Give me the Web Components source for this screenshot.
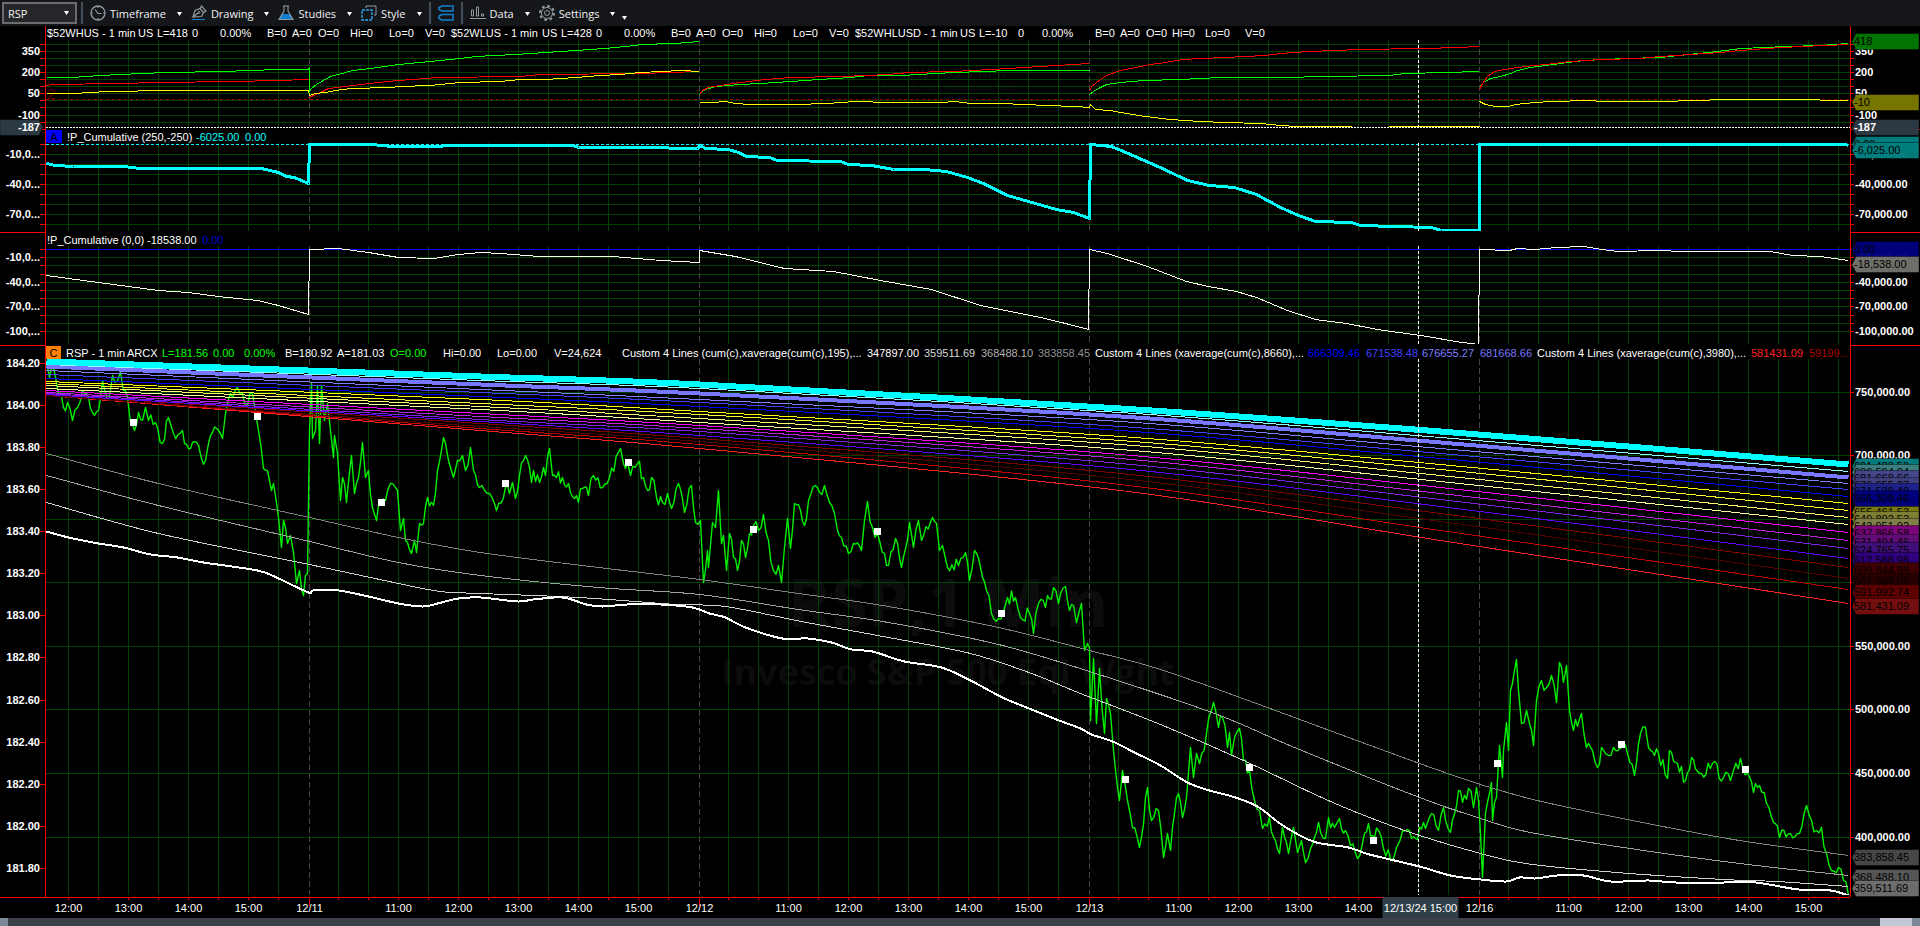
<!DOCTYPE html>
<html lang="en">
<head>
<meta charset="utf-8">
<title>RSP - 1 min</title>
<style>
html, body {
    margin: 0;
    height: 100%;
    background: #000;
    overflow: hidden;
}
</style>
</head>
<body>
<chart-window></chart-window>

<script>
const LEFT = 46
const WIDTH = 1804
const SESSIONS = [309, 699, 1089, 1479]
const CURSOR = 1418

// half-hour lines; the one next to a session start is replaced by the session line
const GRID_X = []
for (let x = 68; x < 1850; x += 30) {
    if (!SESSIONS.includes(x + 1)) GRID_X.push(x)
}

const pct = (value, start, size) => `${(value - start) / size * 100}%`
const line = (x1, y1, x2, y2, stroke, extra = '') =>
    `<line x1="${x1}" y1="${y1}" x2="${x2}" y2="${y2}" stroke="${stroke}" ${extra}/>`

function parse(points) {
    return points.trim().split(/\s+/).map(p => p.split(',').map(Number))
}

// Catmull-Rom through the points
function smooth(points) {
    const p = parse(points)
    let d = `M${p[0]}`
    for (let i = 0; i < p.length - 1; i++) {
        const a = p[i - 1] || p[i], b = p[i], c = p[i + 1], e = p[i + 2] || c
        d += `C${b[0] + (c[0] - a[0]) / 6},${b[1] + (c[1] - a[1]) / 6} ${c[0] - (e[0] - b[0]) / 6},${c[1] - (e[1] - b[1]) / 6} ${c}`
    }
    return d
}

// fills in the small ticks between two price turns
function ticks(points) {
    const p = parse(points)
    let seed = 7
    let d = `M${p[0]}`
    for (let i = 1; i < p.length; i++) {
        const [x0, y0] = p[i - 1], [x1, y1] = p[i]
        const n = Math.floor((x1 - x0) / 2)
        for (let k = 1; k < n; k++) {
            seed = (seed * 16807) % 2147483647
            const noise = (seed / 2147483647 - .5) * 14
            d += `L${x0 + (x1 - x0) * k / n},${y0 + (y1 - y0) * k / n + noise}`
        }
        d += `L${x1},${y1}`
    }
    return d
}

const quote = (name, widths, last) => {
    const texts = [name, 'US', last, '0', '0.00%', 'B=0', 'A=0', 'O=0', 'Hi=0', 'Lo=0', 'V=0']
    return texts.map((t, i) => [t, widths[i]])
}

const band = (color, ys, width = 1) => {
    const xs = [46, 480, 699, 1120, 1440, 1848]
    return {color, width, d: smooth(xs.map((x, i) => `${x},${ys[i]}`).join(' '))}
}
const poly = (color, points, width = 1) => ({color, width, d: 'M' + points.trim().replace(/\s+/g, 'L').replaceAll('LM', 'M')})

const PANES = [
    {
        top: 26, height: 104, head: 14, plot: 88,
        header: [
            ...quote('$52WHUS - 1 min', [92, 19, 35, 28, 47, 25, 26, 32, 39, 36, 26], 'L=418'),
            ...quote('$52WLUS - 1 min', [91, 19, 35, 28, 47, 25, 26, 32, 39, 36, 26], 'L=428'),
            ...quote('$52WHLUSD - 1 min', [105, 19, 39, 24, 53, 25, 26, 26, 33, 40, 26], 'L=-10')
        ],
        grid: [44, 51, 58, 65, 72, 79, 86, 93, 100, 107, 115, 122],
        levels: [{y: 99, color: '#a00000', dash: '3 3'}],
        cursorY: 127,
        labels: [[51, '350'], [72, '200'], [93, '50'], [115, '-100']],
        leftTags: [[127, '-187', '#2e3b45', '#fff']],
        rightTags: [[41, '418', '#007800'], [102, '-10', '#7a7a00'], [127, '-187', '#2e3b45', '#fff']],
        watermark: [['$52WHUS,1 Min', 77, 15], ['$52WLUS,1Min,  $52WHLUSD,1Min', 89, 8]],
        note: '2',
        series: [
            poly('#00ff00', `46,77 72,77 99,75 141,73 167,72 223,71 249,70 279,69 308,69 309,67 309,91 311,88 316,84 323,80 330,76 345,72 352,70
                370,68 398,64 430,61 460,58 475,56 515,54 545,52 575,50 604,48 635,45 640,44 674,43 699,41 M699,95 700,92 705,89 715,86 740,84
                760,83 790,81 819,79 850,77 868,75 901,75 935,73 954,72 983,71 1008,70 1089,70 M1089,94 1093,91 1100,87 1106,84 1120,82 1144,80
                1180,79 1220,77 1280,77 1327,76 1388,75 1405,73 1446,72 1478,71 M1479,86 1483,82 1490,78 1500,76 1510,73 1517,70 1530,67 1545,65
                1560,63 1584,60 1625,58 1660,57 1688,54 1717,51 1741,48 1786,46 1819,45 1848,43`),
            poly('#ff0000', `46,85 52,84 118,83 158,82 233,81 276,80 309,79 M309,97 313,95 320,92 328,88 345,86 360,84 378,82 398,80 425,78 437,77
                520,76 540,74 640,73 699,71 M699,94 702,90 708,87 720,85 740,82 765,79 790,77 840,76 868,75 901,73 905,72 952,71 991,69 1024,67
                1056,65 1089,63 M1089,91 1091,86 1100,79 1106,75 1120,70 1135,67 1150,64 1165,62 1182,59 1200,58 1225,57 1265,55 1280,53 1307,51
                1337,50 1357,49 1425,48 1456,47 1479,46 M1479,89 1482,83 1487,76 1494,71 1510,68 1525,66 1545,64 1570,61 1600,59 1640,58 1660,56
                1690,54 1720,52 1740,50 1765,48 1800,46 1825,45 1848,44`),
            poly('#ffff00', `46,93 74,93 90,92 108,91 130,91 145,90 308,90 309,95 315,93 325,92 335,90 350,88 390,87 400,86 430,85 440,84 460,82
                500,81 519,79 545,79 575,77 600,75 620,74 640,72 681,70 699,71 M699,102 712,102 725,101 735,103 750,104 795,104 827,103 855,101
                889,102 940,102 955,101 970,103 1000,103 1025,104 1045,105 1075,106 1089,107 1090,104 1095,109 1110,110 1120,112 1145,116 1170,119
                1200,121 1225,122 1260,123 1280,125 1296,126 1351,126 M1388,126 1479,126 M1479,101 1485,104 1495,106 1508,106 1515,104 1535,102
                1550,101 1590,100 1600,101 1665,101 1690,100 1730,99 1790,99 1848,100`)
        ]
    },
    {
        top: 130, height: 103, head: 13, plot: 88,
        badge: ['A', '#0000ff', 16],
        header: [['!P_Cumulative (250,-250)', 129], ['-6025.00', 49, '#00ffff'], ['0.00', 30, '#00ffff']],
        grid: [154, 164, 174, 184, 194, 204, 214, 224],
        levels: [{y: 144, color: '#00ffff', dash: '3 2'}],
        labels: [[154, '-10,000.00', '-10,0...'], [184, '-40,000.00', '-40,0...'], [214, '-70,000.00', '-70,0...']],
        rightTags: [[144, '0.00', '#007f7f'], [150, '-6,025.00', '#007f7f']],
        series: [
            poly('#00ffff', `46,163 55,165 73,166 124,166 139,168 261,168 278,172 286,176 294,177 308,183 309,144 371,144 392,146 440,146 445,145
                573,145 578,147 640,147 697,148 700,145 705,148 728,149 738,152 746,156 769,157 777,160 840,161 848,164 871,165 877,166 893,169
                924,169 946,171 967,177 983,183 995,189 1007,195 1028,201 1056,209 1073,212 1089,218 1090,144 1111,146 1130,154 1146,161 1162,168
                1187,180 1209,185 1234,187 1256,194 1280,207 1298,215 1315,221 1351,222 1360,225 1394,226 1431,227 1441,230 1479,230 1479,144
                1845,144 1848,145`, 3)
        ]
    },
    {
        top: 233, height: 113, head: 13, plot: 98,
        header: [['!P_Cumulative (0,0)', 101], ['-18538.00', 55], ['0.00', 30, '#0000d0']],
        grid: [257, 265, 274, 282, 290, 298, 306, 315, 323, 331],
        levels: [{y: 249, color: '#0000ff'}],
        labels: [[257, '-10,000.00', '-10,0...'], [282, '-40,000.00', '-40,0...'], [306, '-70,000.00', '-70,0...'], [331, '-100,000.00', '-100,...']],
        rightTags: [[249, '0.00', '#00007f'], [264, '-18,538.00', '#74746e']],
        series: [
            poly('#fffff0', `46,275 68,278 98,282 128,286 158,290 188,292 218,296 257,300 278,305 308,314 309,249 338,248 368,252 398,257 433,258
                458,254 480,252 500,253 539,256 612,256 661,260 699,262 699,250 735,256 784,268 833,271 880,280 931,289 980,305 1040,317 1065,323
                1088,329 1089,249 1107,253 1147,266 1186,281 1208,286 1236,291 1256,297 1287,310 1315,319 1346,323 1377,329 1427,336 1455,341
                1478,344 1479,249 1509,250 1517,248 1534,249 1556,247 1584,246 1601,249 1618,251 1657,250 1683,251 1770,251 1792,255 1820,256
                1848,260`)
        ]
    },
    {
        top: 346, height: 551, head: 13, plot: 536,
        badge: ['C', '#ff7f00', 15],
        header: [
            ['RSP - 1 min', 61], ['ARCX', 35], ['L=181.56', 51, '#00ff00'], ['0.00', 31, '#00ff00'], ['0.00%', 41, '#00ff00'],
            ['B=180.92', 52], ['A=181.03', 53], ['O=0.00', 53, '#00ff00'], ['Hi=0.00', 54], ['Lo=0.00', 57], ['V=24,624', 68],
            ['Custom 4 Lines (cum(c),xaverage(cum(c),195),...', 245], ['347897.00', 57], ['359511.69', 57, '#d8d8d8'],
            ['368488.10', 57, '#b0b0b0'], ['383858.45', 57, '#909090'],
            ['Custom 4 Lines (xaverage(cum(c),8660),...', 213], ['666309.46', 58, '#0000ff'], ['671538.48', 56, '#4040ff'],
            ['676655.27', 58, '#7f7fff'], ['681668.66', 57, '#7777ff'],
            ['Custom 4 Lines (xaverage(cum(c),3980),...', 214], ['581431.09', 58, '#ff2020'], ['59199...', 40, '#b00000']
        ],
        grid: [392, 455, 519, 582, 646, 709, 773, 837],
        levels: [],
        labels: [[392, '750,000.00'], [455, '700,000.00'], [646, '550,000.00'], [709, '500,000.00'], [773, '450,000.00'], [837, '400,000.00']],
        leftLabels: [[363, '184.20'], [405, '184.00'], [447, '183.80'], [489, '183.60'], [531, '183.40'], [573, '183.20'], [615, '183.00'],
            [657, '182.80'], [700, '182.60'], [742, '182.40'], [784, '182.20'], [826, '182.00'], [868, '181.80']],
        rightTags: [
            [466, '691,488.59', '#007f7f'], [472, '686,594.04', '#3f8080'], [478, '681,668.66', '#45458a'], [485, '676,655.27', '#404080'],
            [491, '671,538.48', '#20208c'], [512, '655,461.53', '#7f7f10'], [519, '649,802.53', '#808035'], [526, '643,951.92', '#80804a'],
            [498, '666,309.46', '#00007f'], [533, '637,866.58', '#7f007f'], [542, '631,494.46', '#600f78'], [550, '624,765.75', '#40107a'],
            [560, '617,588.98', '#300080'], [570, '609,844.99', '#400000'], [581, '601,309.00', '#280000'], [592, '591,992.74', '#600000'],
            [606, '581,431.09', '#7a1010'], [857, '383,858.45', '#4a4a4a'], [877, '368,488.10', '#5a5a5a'], [888, '359,511.69', '#707070']
        ],
        watermark: [['RSP,1 Min', 626, 66], ['Invesco S&amp;P 500 Eql Wght', 684, 36]],
        marks: [[133, 422], [257, 416], [381, 502], [505, 483], [629, 462], [753, 529], [877, 531], [1001, 613], [1125, 779], [1249, 767],
            [1373, 840], [1497, 763], [1621, 744], [1745, 769]],
        series: [
            {color: '#00f000', width: 1.4, soft: true, d: ticks(`46,362 49,377 52,362 55,377 58,393 63,407 67,402 72,420 77,407 82,390 88,397 92,412 98,410
                102,380 105,393 108,400 112,375 117,380 120,372 123,390 127,397 130,422 134,430 138,412 142,420 145,407 148,420 155,422 162,443
                168,417 173,433 182,430 184,443 192,442 198,445 201,458 205,460 208,443 212,432 218,430 222,438 225,413 230,393 237,387 242,393
                247,405 252,393 255,412 258,430 263,468 267,470 271,490 273,483 278,517 281,547 283,520 287,543 290,535 293,552 296,583 299,570
                303,595 305,575 307,573 309,430 311,382 312,438 315,430 317,385 319,443 321,385 324,420 327,403 330,430 333,457 334,435 337,453
                340,500 342,477 346,502 351,455 354,493 358,477 362,442 365,477 368,470 372,507 376,520 380,500 385,500 390,483 397,490 400,530
                403,518 405,540 411,553 414,540 416,552 419,523 423,523 427,497 433,505 437,470 443,437 445,443 448,460 453,477 457,460 462,455
                465,470 470,447 473,470 479,487 484,490 489,493 496,510 505,487 509,493 512,482 515,498 519,475 525,455 531,482 533,470 539,482
                543,467 545,475 549,448 552,475 562,477 568,483 578,502 582,488 588,495 593,475 602,487 609,477 620,448 623,463 627,462 630,475
                637,463 643,477 647,490 651,477 656,497 662,502 667,493 671,508 678,483 684,512 691,485 695,522 700,520 703,582 707,550 708,567
                712,522 715,527 718,490 721,543 723,535 726,570 729,533 733,557 737,570 741,540 745,557 749,533 753,525 758,530 763,514 768,540
                773,570 778,565 781,582 784,547 787,518 790,548 794,503 800,510 804,525 808,500 815,485 819,492 824,485 829,502 834,513 837,530
                841,537 848,553 853,543 861,550 864,520 867,501 872,527 877,533 884,553 888,565 895,538 901,567 909,522 913,547 918,520 921,540
                932,517 936,523 939,550 942,545 947,567 958,565 965,552 969,580 974,550 980,567 986,590 991,613 998,618 1007,597 1015,597
                1020,617 1029,613 1033,633 1038,603 1045,607 1053,587 1058,603 1065,586 1069,610 1073,605 1076,622 1081,603 1084,650 1087,643
                1089,647 1090,720 1093,658 1096,723 1099,668 1104,733 1106,698 1110,713 1113,750 1119,800 1122,770 1127,800 1132,827 1139,847
                1147,787 1151,820 1158,810 1163,857 1167,833 1170,850 1174,813 1178,793 1182,817 1186,797 1190,747 1193,777 1196,753 1199,763
                1206,733 1213,702 1218,727 1222,717 1227,747 1229,732 1231,755 1234,737 1239,728 1243,760 1249,770 1254,800 1259,810 1262,828
                1269,817 1275,840 1279,853 1282,827 1288,853 1293,827 1297,852 1301,840 1305,862 1310,848 1318,822 1325,838 1328,817 1334,827
                1339,818 1345,830 1350,845 1357,858 1364,833 1368,823 1372,835 1378,830 1383,848 1390,858 1396,847 1402,830 1409,830 1415,838
                1423,822 1425,828 1431,813 1438,830 1443,807 1450,832 1458,790 1462,802 1468,788 1473,807 1476,787 1478,800 1482,877 1485,813
                1489,793 1491,782 1492,820 1496,797 1499,745 1502,777 1503,750 1506,722 1508,750 1510,690 1514,670 1516,659 1518,690 1521,723
                1526,710 1529,723 1533,745 1536,700 1541,680 1546,687 1551,675 1556,702 1559,662 1563,682 1566,665 1569,710 1573,730 1581,713
                1586,747 1592,750 1597,767 1601,747 1608,755 1613,747 1621,747 1627,753 1634,775 1640,733 1645,727 1648,747 1658,753 1667,778
                1669,750 1677,763 1685,780 1691,757 1701,773 1712,763 1723,777 1730,780 1733,770 1740,758 1747,773 1753,792 1759,785 1766,803
                1773,822 1779,837 1790,833 1799,833 1806,805 1811,820 1816,830 1821,827 1826,853 1831,870 1838,867 1843,880 1848,895`)},
            band('#ff2020', [395, 430, 448, 490, 540, 603]),
            band('#c00000', [395, 428, 444, 484, 530, 589]),
            band('#580000', [395, 426, 441, 478, 521, 578]),
            band('#800000', [394, 423, 438, 473, 513, 567]),
            band('#6000ff', [394, 421, 435, 468, 506, 558]),
            band('#8020e0', [393, 419, 431, 463, 499, 548]),
            band('#c020e0', [392, 416, 428, 458, 493, 540]),
            band('#ff00ff', [390, 413, 425, 454, 487, 532]),
            band('#ffffa0', [388, 409, 422, 449, 481, 524]),
            band('#ffff70', [385, 406, 418, 444, 475, 517]),
            band('#ffff30', [383, 403, 414, 440, 469, 510]),
            band('#ffff00', [381, 399, 411, 436, 464, 503]),
            band('#0000ff', [378, 396, 406, 430, 458, 496]),
            band('#4040ff', [374, 392, 402, 426, 453, 489]),
            band('#7f7fff', [370, 389, 399, 421, 448, 483]),
            band('#7777ff', [366, 384, 393, 416, 442, 477], 4),
            band('#90ffff', [364, 380, 388, 412, 437, 471]),
            band('#00ffff', [361, 376, 384, 408, 431, 464], 6),
            {color: '#808080', width: 1, d: smooth(`46,453 158,483 309,517 398,537 480,552 598,567 699,579 798,593 888,606 998,627 1089,650 1160,669
                1267,707 1348,737 1419,763 1480,784 1541,801 1642,822 1739,840 1848,855`)},
            {color: '#a0a0a0', width: 1, d: smooth(`46,475 158,505 309,541 398,562 480,575 598,587 699,594 798,609 888,622 998,644 1089,671 1214,713
                1294,747 1419,797 1480,818 1525,831 1616,846 1739,863 1848,875`)},
            {color: '#d0d0d0', width: 1, d: smooth(`46,502 158,533 309,564 398,583 440,591 480,593 578,597 676,604 725,606 806,622 888,637 970,653
                1031,673 1080,693 1160,724 1241,759 1321,797 1369,817 1419,835 1480,853 1525,863 1616,872 1723,879 1776,881 1848,886`)},
            {color: '#ffffff', width: 2, d: smooth(`46,531 68,537 98,543 123,547 150,554 177,557 203,562 257,570 278,578 308,592 313,590 338,590
                368,596 398,603 422,606 437,603 458,598 480,597 517,601 533,599 562,597 586,604 602,606 627,604 660,604 692,607 709,613 725,617
                745,627 782,638 807,638 831,642 851,649 872,651 904,661 941,667 970,680 1002,697 1031,709 1056,719 1080,728 1091,734 1112,741
                1134,752 1160,765 1187,782 1209,790 1235,797 1257,806 1278,822 1294,832 1316,842 1348,847 1369,854 1419,866 1450,875 1480,879
                1506,881 1519,877 1535,878 1557,875 1583,875 1610,881 1648,880 1675,882 1723,882 1755,882 1798,889 1830,890 1848,895`)}
        ]
    }
]

class PaneHeader extends HTMLElement {

    constructor() {
        super()
        this.attachShadow({mode: 'open'})
    }

    set pane(pane) {
        const badge = pane.badge
            ? `<b style="width: ${pane.badge[2]}px; background: ${pane.badge[1]}">${pane.badge[0]}</b>` : ''
        const fields = pane.header.map(([text, width, color = '#fff']) =>
            `<span style="min-width: ${width}px; color: ${color}">${text}</span>`)
        this.shadowRoot.innerHTML = `
<style>
:host {
    display: flex;
    height: ${pane.head}px;
    line-height: ${pane.head + 1}px;
    font-size: 11px;
    white-space: nowrap;
    overflow: hidden;
}
b {
    margin-right: 5px;
    color: #000;
    font-weight: normal;
    text-align: center;
}
span {
    flex: none;
    box-sizing: border-box;
}
span:first-of-type {
    padding-left: ${badge ? 0 : 1}px;
}
</style>
${badge}${fields.join('')}`
    }
}

class PlotArea extends HTMLElement {

    constructor() {
        super()
        this.attachShadow({mode: 'open'})
    }

    set pane(pane) {
        const top = pane.top + pane.head
        const y = v => pct(v + .5, top, pane.plot)
        const x = v => pct(v + .5, LEFT, WIDTH)
        const grid = GRID_X.map(v => line(x(v), 0, x(v), '100%', '#004000'))
            .concat(pane.grid.map(v => line(0, y(v), '100%', y(v), '#004000')))
            .concat(SESSIONS.map(v => line(x(v), 0, x(v), '100%', '#444', 'stroke-dasharray="6 3"')))
        const levels = pane.levels.map(l =>
            line(0, y(l.y), '100%', y(l.y), l.color, l.dash ? `stroke-dasharray="${l.dash}"` : ''))
        const watermark = (pane.watermark || []).map(([text, base, size]) =>
            `<text class="watermark" x="50%" y="${y(base)}" font-size="${size}">${text}</text>`)
        const series = pane.series.map(s =>
            `<path d="${s.d}" stroke="${s.color}" stroke-width="${s.width}" ${s.soft ? 'shape-rendering="auto"' : ''}/>`)
        const marks = (pane.marks || []).map(([mx, my]) =>
            `<svg x="${x(mx)}" y="${y(my)}" overflow="visible"><path d="M-4-4h7v7h-7z" fill="#fff"/></svg>`)
        this.shadowRoot.innerHTML = `
<style>
:host {
    display: block;
    min-height: 0;
    margin-bottom: 2px;
}
svg {
    display: block;
    shape-rendering: crispEdges;
}
.root {
    width: 100%;
    height: 100%;
}
.series {
    fill: none;
    stroke-linejoin: round;
}
.series path {
    vector-effect: non-scaling-stroke;
}
.watermark {
    font-family: "Open Sans", sans-serif;
    font-weight: bold;
    text-anchor: middle;
    fill: #0c0c0e;
}
.note {
    font-size: 15px;
    fill: #600000;
}
</style>
<svg class="root">
    ${watermark.join('')}
    ${grid.join('')}
    ${levels.join('')}
    ${pane.note ? `<text class="note" x="1" y="${y(98)}">${pane.note}</text>` : ''}
    <svg class="series" width="100%" height="100%" viewBox="${LEFT - .5} ${top - .5} ${WIDTH} ${pane.plot}" preserveAspectRatio="none">${series.join('')}</svg>
    ${marks.join('')}
    ${line(x(CURSOR), 0, x(CURSOR), '100%', '#fff', 'stroke-dasharray="3 2"')}
    ${pane.cursorY ? line(0, y(pane.cursorY), '100%', y(pane.cursorY), '#fff', 'stroke-dasharray="2 1"') : ''}
</svg>`
    }
}

class PriceAxis extends HTMLElement {

    constructor() {
        super()
        this.attachShadow({mode: 'open'})
    }

    set pane(pane) {
        const left = this.getAttribute('side') === 'left'
        const y = v => pct(v + .5, pane.top, pane.height)
        const labels = left && pane.leftLabels ? pane.leftLabels : pane.labels
        const marks = left && pane.leftLabels ? pane.leftLabels.map(l => l[0]) : pane.grid.concat(pane.levels.filter(l => pane.top > 100).map(l => l.y))
        const tags = (left ? pane.leftTags : pane.rightTags) || []
        const shape = left ? 'M0-8H39L43 0L39 8H0z' : 'M1 0L5-8H68V8H5z'
        const textX = left ? 40 : 4
        const put = (v, body) => `<svg y="${y(v)}" overflow="visible">${body}</svg>`
        this.shadowRoot.innerHTML = `
<style>
:host {
    display: block;
    min-height: 0;
    box-sizing: border-box;
    position: relative;
    border-${left ? 'right' : 'left'}: 1px solid #f00;
}
svg {
    display: block;
    overflow: visible;
}
.root {
    width: 100%;
    height: 100%;
}
text {
    font-size: 11px;
    text-anchor: ${left ? 'end' : 'start'};
}
.label {
    font-weight: bold;
    fill: #fff;
}
.tag {
    stroke: #00000066;
    opacity: .96;
}
line {
    shape-rendering: crispEdges;
}
</style>
<svg class="root">
    ${marks.map(v => put(v, left ? line(40, 0, 45, 0, '#f00') : line(0, 0, 3, 0, '#f00'))).join('')}
    ${pane.top < 300 ? put(pane.top + pane.height - 1, line(0, 0, '100%', 0, '#f00')) : ''}
    ${labels.map(([v, text, short]) => put(v, `<text class="label" x="${textX}" y="3">${left && short || text}</text>`)).join('')}
    ${tags.map(([v, text, fill, ink = '#000']) => put(v, `<path class="tag" d="${shape}" fill="${fill}"/>
        <text x="${textX - (left ? 0 : 1)}" y="3" fill="${ink}" ${ink === '#fff' ? 'font-weight="bold"' : ''}>${text}</text>`)).join('')}
</svg>`
    }
}

class ChartPane extends HTMLElement {

    constructor() {
        super()
        this.attachShadow({mode: 'open'}).innerHTML = `
<style>
:host {
    display: grid;
    grid-template-columns: 46px 1fr 70px;
    min-height: 0;
}
section {
    display: grid;
    grid-template-rows: auto 1fr;
    min-width: 0;
    min-height: 0;
}
</style>
<price-axis side="left"></price-axis>
<section>
    <pane-header></pane-header>
    <plot-area></plot-area>
</section>
<price-axis side="right"></price-axis>
`
    }

    connectedCallback() {
        const pane = PANES[this.getAttribute('index')]
        this.style.flex = `${pane.height} 1 0`
        for (const part of this.shadowRoot.querySelectorAll('price-axis, pane-header, plot-area')) {
            part.pane = pane
        }
    }
}

class TimeAxis extends HTMLElement {

    constructor() {
        super()
        const x = v => pct(v + .5, LEFT, WIDTH)
        const hours = {
            '12:00': [68, 458, 848, 1238, 1628], '13:00': [128, 518, 908, 1298, 1688], '14:00': [188, 578, 968, 1358, 1748],
            '15:00': [248, 638, 1028, 1808], '11:00': [398, 788, 1178, 1568],
            '12/11': [309], '12/12': [699], '12/13': [1089], '12/16': [1479]
        }
        const labels = Object.entries(hours).flatMap(([text, xs]) => xs.map(v => `<text x="${x(v)}" y="14">${text}</text>`))
        this.attachShadow({mode: 'open'}).innerHTML = `
<style>
:host {
    display: block;
    flex: none;
    height: 20px;
    margin-right: 70px;
    padding-left: 46px;
    border-top: 1px solid #f00;
}
svg {
    display: block;
    overflow: visible;
}
.root {
    width: 100%;
    height: 20px;
}
text {
    font-size: 11px;
    text-anchor: middle;
    fill: #fff;
}
line {
    shape-rendering: crispEdges;
}
</style>
<svg class="root">
    ${GRID_X.map(v => line(x(v), 0, x(v), 2, '#f00')).join('')}
    ${SESSIONS.map(v => line(x(v), 0, x(v), 8, '#f00')).join('')}
    ${labels.join('')}
    <svg x="${x(CURSOR)}"><rect x="-36" y="-1" width="76" height="21" fill="#2f3e48"/><text x="2" y="14">12/13/24 15:00</text></svg>
</svg>`
    }
}

class ToolbarMenu extends HTMLElement {

    constructor() {
        super()
        this.attachShadow({mode: 'open'}).innerHTML = `
<style>
:host {
    display: block;
}
button {
    display: flex;
    align-items: center;
    padding: 0;
    border: 0;
    background: none;
    color: #f2f2f2;
    font: inherit;
}
::slotted(svg) {
    display: block;
    margin-right: 4px;
}
.arrow {
    margin: 2px 0 0 11px;
}
</style>
<button type="button"><slot name="icon"></slot><slot></slot><svg class="arrow" width="5" height="4"><path d="M0 0h5L2.5 4z" fill="#fff"/></svg></button>
`
    }
}

class ChartToolbar extends HTMLElement {

    constructor() {
        super()
        this.attachShadow({mode: 'open'}).innerHTML = `
<style>
:host {
    display: flex;
    flex: none;
    align-items: center;
    gap: 9px;
    box-sizing: border-box;
    height: 26px;
    padding-left: 2px;
    background: #14161a;
    color: #f2f2f2;
    font: 11px "Open Sans", "Noto Sans", sans-serif;
}
.symbol {
    display: grid;
    align-items: center;
    width: 75px;
    margin-right: -3px;
}
.symbol > * {
    grid-area: 1 / 1;
}
select {
    appearance: none;
    box-sizing: border-box;
    width: 100%;
    height: 22px;
    padding: 0 4px;
    border: 2px solid #6c6c6c;
    border-radius: 0;
    background: #252629;
    color: #f2f2f2;
    font: inherit;
}
.symbol svg {
    justify-self: end;
    margin-right: 8px;
    pointer-events: none;
}
hr {
    width: 2px;
    height: 22px;
    margin: 0 -2px;
    border: 0;
    background: #454e5b;
}
.link {
    padding: 0;
    border: 0;
    background: none;
}
.link svg {
    display: block;
}
.more {
    align-self: flex-end;
    margin: 0 0 6px -2px;
}
.grey {
    fill: none;
    stroke: #9299a1;
}
.blue {
    fill: none;
    stroke: #1581cc;
}
</style>
<div class="symbol">
    <select aria-label="Symbol"><option>RSP</option></select>
    <svg width="5" height="4"><path d="M0 0h5L2.5 4z" fill="#fff"/></svg>
</div>
<hr>
<toolbar-menu>
    <svg slot="icon" class="grey" width="16" height="16">
        <circle cx="8" cy="8" r="7" stroke-width="1.3"/>
        <path d="M8 1v2M8 13v2M1 8h2M13 8h2M5 4.5L8 8.500h3.500" stroke-width="1.2"/>
    </svg>Timeframe
</toolbar-menu>
<toolbar-menu>
    <svg slot="icon" class="grey" width="16" height="16">
        <path d="M2 12L4 5.500L9 3.500L12.500 7.500L10.500 11.500L2 12L7 8M9 3.500L10.500 1L15 6L12.500 7.500" stroke-width="1.2"/>
        <circle cx="8" cy="7.500" r="1"/>
        <path class="blue" d="M1 14.500h13"/>
    </svg>Drawing
</toolbar-menu>
<toolbar-menu>
    <svg slot="icon" class="grey" width="16" height="16">
        <path d="M4 9h8l3 6H1z" fill="#0f7fd0" stroke="none"/>
        <path d="M5 1h6M6 1v5L1 14.500h14L10 6V1" stroke-width="1.1"/>
    </svg>Studies
</toolbar-menu>
<toolbar-menu>
    <svg slot="icon" class="grey" width="16" height="16">
        <path d="M5 3V1h10v9h-2"/>
        <path class="blue" d="M1 5h10v10H1z" style="stroke: #2aa5ee" stroke-width="1.4" stroke-dasharray="3 1"/>
    </svg>Style
</toolbar-menu>
<hr>
<button class="link" type="button" aria-label="Layout">
    <svg class="blue" width="16" height="16">
        <path d="M4 1h11v5H4L1 4.500v-2zM4 9.500h11v5.500H4L1 13.500v-2.500z" stroke-width="1.5"/>
    </svg>
</button>
<hr>
<toolbar-menu>
    <svg slot="icon" class="grey" width="16" height="16">
        <path d="M1.500 11V5h2v6zM6.500 11V2h2v9zM11.500 11V9h2v2zM0 13.500h16"/>
    </svg>Data
</toolbar-menu>
<toolbar-menu>
    <svg slot="icon" class="grey" width="16" height="16">
        <circle cx="8" cy="8" r="7" stroke-width="2" stroke-dasharray="2.750 2.750"/>
        <circle cx="8" cy="8" r="5.500"/>
        <circle cx="8" cy="8" r="2.500"/>
    </svg>Settings
</toolbar-menu>
<svg class="more" width="5" height="4"><path d="M0 0h5L2.5 4z" fill="#fff"/></svg>
`
    }
}

class ChartScroll extends HTMLElement {

    constructor() {
        super()
        this.attachShadow({mode: 'open'}).innerHTML = `
<style>
:host {
    display: flex;
    flex: none;
    height: 8px;
    background: #3c404a;
}
i {
    width: 8px;
    background: #7c8797;
}
.thumb {
    width: 32px;
    margin-left: auto;
    background: #c3c8d4;
}
</style>
<i></i><i class="thumb"></i><i></i>
`
    }
}

class ChartWindow extends HTMLElement {

    constructor() {
        super()
        this.attachShadow({mode: 'open'}).innerHTML = `
<style>
:host {
    display: flex;
    flex-direction: column;
    height: 100vh;
    color: #fff;
    font-family: "Liberation Sans", Arial, sans-serif;
}
</style>
<chart-toolbar></chart-toolbar>
<chart-pane index="0"></chart-pane>
<chart-pane index="1"></chart-pane>
<chart-pane index="2"></chart-pane>
<chart-pane index="3"></chart-pane>
<time-axis></time-axis>
<chart-scroll></chart-scroll>
`
    }
}

customElements.define('pane-header', PaneHeader)
customElements.define('plot-area', PlotArea)
customElements.define('price-axis', PriceAxis)
customElements.define('chart-pane', ChartPane)
customElements.define('time-axis', TimeAxis)
customElements.define('toolbar-menu', ToolbarMenu)
customElements.define('chart-toolbar', ChartToolbar)
customElements.define('chart-scroll', ChartScroll)
customElements.define('chart-window', ChartWindow)
</script>
</body>
</html>
